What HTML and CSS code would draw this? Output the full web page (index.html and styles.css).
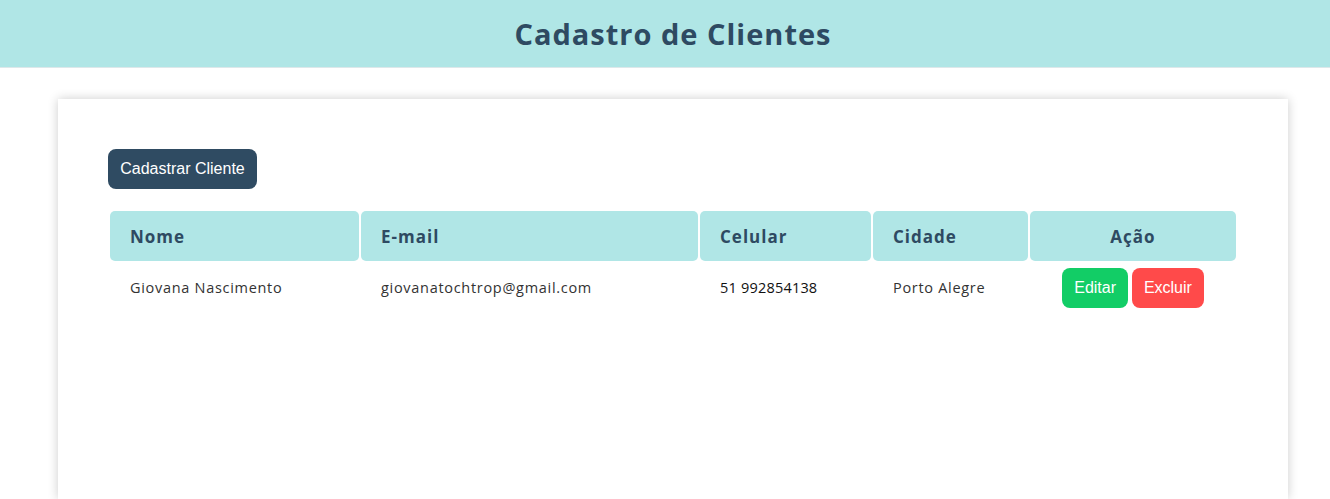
FILE: index.html
```html
<!DOCTYPE html>
<html lang="pt-BR">
<head>
<meta charset="utf-8">
<title>Cadastro de Clientes</title>
<link rel="stylesheet" href="styles.css">
</head>
<body>
<header class="topbar">
  <h1 class="title">Cadastro de Clientes</h1>
</header>
<main class="card">
  <button class="btn btn-primary">Cadastrar Cliente</button>
  <table class="clients">
    <thead>
      <tr>
        <th class="c-nome">Nome</th>
        <th class="c-email">E-mail</th>
        <th class="c-cel">Celular</th>
        <th class="c-cid">Cidade</th>
        <th class="c-acao">Ação</th>
      </tr>
    </thead>
    <tbody>
      <tr>
        <td>Giovana Nascimento</td>
        <td>giovanatochtrop@gmail.com</td>
        <td class="phone">51 992854138</td>
        <td>Porto Alegre</td>
        <td class="actions">
          <button class="btn btn-edit">Editar</button>
          <button class="btn btn-del">Excluir</button>
        </td>
      </tr>
    </tbody>
  </table>
</main>
</body>
</html>
```
FILE: styles.css
```css
* { box-sizing: border-box; }
html, body { margin: 0; padding: 0; background: #fff; }
body {
  font-family: "Open Sans", "Noto Sans", sans-serif;
  color: #2c3e50;
  overflow: hidden;
  height: 499px;
}
.topbar {
  height: 68px;
  background: #b0e6e6;
  border-bottom: 1px solid #dde8ea;
  display: flex;
  align-items: center;
  justify-content: center;
}
.title {
  margin: 0;
  font-size: 29px;
  font-weight: 700;
  letter-spacing: 1px;
  color: #2e4a62;
  padding-left: 16px;
}
.card {
  margin: 31px 0 0 58px;
  width: 1230px;
  height: 400px;
  background: #fff;
  box-shadow: 0 0 10px rgba(0,0,0,0.2);
  padding: 50px;
}
.btn {
  font-family: "Liberation Sans", Arial, sans-serif;
  font-size: 16px;
  color: #fff;
  border: none;
  border-radius: 8px;
  height: 40px;
  padding: 0;
  cursor: pointer;
  letter-spacing: 0;
}
.btn-primary { background: #2f4b62; width: 149px; }
.clients {
  margin-top: 20px;
  border-collapse: separate;
  border-spacing: 2px;
  width: 1130px;
  table-layout: fixed;
}
.clients th {
  background: #b0e6e6;
  height: 50px;
  border-radius: 5px;
  text-align: left;
  padding: 0 0 0 20px;
  font-size: 17px;
  font-weight: 700;
  letter-spacing: 1px;
  color: #2e4a62;
}
.c-nome { width: 249px; }
.c-email { width: 337px; }
.c-cel { width: 171px; }
.c-cid { width: 155px; }
.c-acao { width: 206px; }
.clients th.c-acao { text-align: center; padding: 0; }
.clients td {
  height: 50px;
  padding: 0 0 2px 20px;
  font-size: 14.5px;
  color: #333;
  letter-spacing: 0.7px;
  vertical-align: middle;
}
.clients td.phone { color: #111; letter-spacing: 0.2px; }
.clients td.actions { padding: 0; text-align: center; letter-spacing: 0; }
.btn-edit { background: #12cd66; width: 66px; }
.btn-del { background: #ff4a4a; width: 72px; }
```
